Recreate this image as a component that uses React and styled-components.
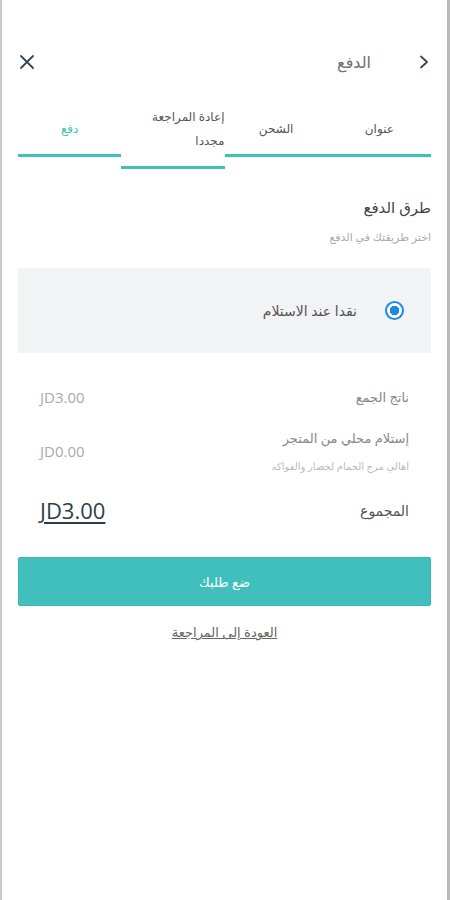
import styled, { createGlobalStyle } from "styled-components";

const GlobalStyle = createGlobalStyle`
  html, body {
    margin: 0;
    padding: 0;
    background: #fff;
  }
  body {
    font-family: "Noto Sans", "DejaVu Sans", sans-serif;
  }
`;

const tabs = [
  { label: "عنوان", done: true },
  { label: "الشحن", done: true },
  { label: "إعادة المراجعة مجددا", done: true, start: true },
  { label: "دفع", active: true },
];

const App = () => {
  return (
    <Screen dir="rtl">
      <GlobalStyle />
      <Header>
        <IconButton aria-label="back">
          <svg width="16" height="16" viewBox="0 0 16 16" fill="none">
            <path d="M5 2.5 L11 8 L5 13.5" stroke="#37474f" strokeWidth="1.8" strokeLinecap="round" strokeLinejoin="round" />
          </svg>
        </IconButton>
        <Title>الدفع</Title>
        <Spacer />
        <IconButton aria-label="close">
          <svg width="18" height="18" viewBox="0 0 18 18" fill="none">
            <path d="M3 3 L15 15 M15 3 L3 15" stroke="#37474f" strokeWidth="1.8" strokeLinecap="round" />
          </svg>
        </IconButton>
      </Header>

      <Tabs>
        {tabs.map((t) => (
          <Tab key={t.label} $active={t.active} $start={t.start}>
            {t.label}
          </Tab>
        ))}
      </Tabs>

      <Section>
        <SectionTitle>طرق الدفع</SectionTitle>
        <SectionHint>اختر طريقتك في الدفع</SectionHint>
      </Section>

      <MethodBox>
        <Radio />
        <MethodLabel>نقدا عند الاستلام</MethodLabel>
      </MethodBox>

      <Summary>
        <Row>
          <RowText>
            <RowLabel>ناتج الجمع</RowLabel>
          </RowText>
          <Amount>JD3.00</Amount>
        </Row>
        <Row>
          <RowText>
            <RowLabel>إستلام محلي من المتجر</RowLabel>
            <RowNote>اهالي مرج الحمام لخضار والفواكه</RowNote>
          </RowText>
          <Amount>JD0.00</Amount>
        </Row>
        <Row>
          <RowText>
            <RowLabel $strong>المجموع</RowLabel>
          </RowText>
          <Total>JD3.00</Total>
        </Row>
      </Summary>

      <PlaceOrder>ضع طلبك</PlaceOrder>
      <BackLink>العودة إلى المراجعة</BackLink>
    </Screen>
  );
};

const Screen = styled.div`
  box-sizing: border-box;
  min-height: 900px;
  border-left: 2px solid #c9c9c9;
  border-right: 3px solid #b9b9b9;
  padding: 0 16px 0 16px;
  display: flex;
  flex-direction: column;
`;

const Header = styled.div`
  display: flex;
  align-items: center;
  height: 40px;
  margin: 42px -4px 0 -2px;
`;

const IconButton = styled.div`
  width: 22px;
  height: 22px;
  display: flex;
  align-items: center;
  justify-content: center;
`;

const Title = styled.div`
  margin-right: 42px;
  font-size: 16px;
  color: #707070;
`;

const Spacer = styled.div`
  flex: 1;
`;

const Tabs = styled.div`
  display: grid;
  grid-template-columns: repeat(4, 1fr);
  align-items: center;
  margin-top: 23px;
`;

const Tab = styled.div`
  box-sizing: border-box;
  padding: 0 0 13px;
  font-size: 12px;
  line-height: 24px;
  text-align: ${(p) => (p.$start ? "start" : "center")};
  color: ${(p) => (p.$active ? "#3dbfb8" : "#555")};
  border-bottom: 3px solid #3fc1bb;
`;

const Section = styled.div`
  margin-top: 28px;
  display: flex;
  flex-direction: column;
  gap: 12px;
`;

const SectionTitle = styled.div`
  font-size: 15px;
  color: #444;
`;

const SectionHint = styled.div`
  font-size: 11px;
  color: #aaa;
`;

const MethodBox = styled.div`
  margin-top: 24px;
  height: 85px;
  background: #f2f3f5;
  display: flex;
  align-items: center;
  padding: 0 27px;
  gap: 28px;
`;

const Radio = styled.div`
  box-sizing: border-box;
  width: 19px;
  height: 19px;
  border-radius: 50%;
  border: 2px solid #1e88e5;
  background: radial-gradient(circle, #1e88e5 0 4.5px, #fff 5px);
`;

const MethodLabel = styled.div`
  font-size: 14px;
  color: #555;
`;

const Summary = styled.div`
  margin-top: 34px;
  padding: 0 22px;
  display: flex;
  flex-direction: column;
  gap: 22px;
`;

const Row = styled.div`
  display: flex;
  align-items: center;
  justify-content: space-between;
`;

const RowText = styled.div`
  display: flex;
  flex-direction: column;
  gap: 12px;
`;

const RowLabel = styled.div`
  font-size: ${(p) => (p.$strong ? "14px" : "13px")};
  color: ${(p) => (p.$strong ? "#555" : "#888")};
`;

const RowNote = styled.div`
  font-size: 10px;
  color: #bbb;
`;

const Amount = styled.div`
  direction: ltr;
  font-family: "Open Sans", sans-serif;
  font-size: 15px;
  color: #aaa;
`;

const Total = styled.div`
  direction: ltr;
  font-family: "Open Sans", sans-serif;
  font-size: 22px;
  color: #2f3e46;
  text-decoration: underline;
  text-underline-offset: 3px;
`;

const PlaceOrder = styled.button`
  margin-top: 32px;
  height: 49px;
  border: 1px solid #33b8b4;
  border-radius: 2px;
  background: #40bfbc;
  color: #fff;
  font-family: inherit;
  font-size: 13px;
  cursor: pointer;
`;

const BackLink = styled.a`
  margin-top: 17px;
  align-self: center;
  font-size: 13px;
  color: #666;
  text-decoration: underline;
`;

export default App;
